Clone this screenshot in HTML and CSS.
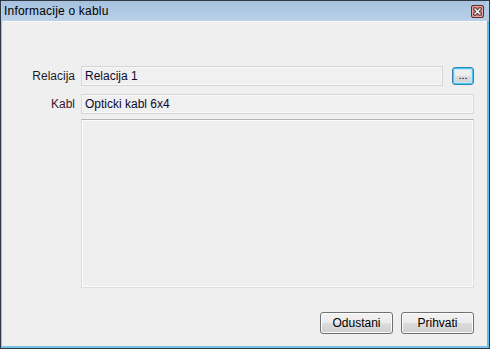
FILE: index.html
```html
<!DOCTYPE html>
<html>
<head>
<meta charset="utf-8">
<link rel="stylesheet" href="styles.css">
</head>
<body>
<div class="window">
  <div class="titlebar">
    <span class="title">Informacije o kablu</span>
    <span class="close">
      <svg width="13" height="13" viewBox="0 0 13 13">
        <rect x="0.5" y="0.5" width="12" height="12" rx="1.5" fill="#c9706e" stroke="#5b2a2a"/>
        <rect x="1.5" y="1.5" width="10" height="10" rx="1" fill="none" stroke="#e8a8a4" stroke-width="1"/>
        <path d="M4 4 L9 9 M9 4 L4 9" stroke="#3a2a2a" stroke-width="3" stroke-linecap="square"/>
        <path d="M4 4 L9 9 M9 4 L4 9" stroke="#ffffff" stroke-width="1.5" stroke-linecap="square"/>
      </svg>
    </span>
  </div>
  <div class="frame">
    <div class="content">
      <div class="form">
        <label class="lbl">Relacija</label>
        <div class="fieldrow">
          <div class="field grow">Relacija 1</div>
          <button class="dots">...</button>
        </div>
        <label class="lbl lbl-kabl">Kabl</label>
        <div class="field">Opticki kabl 6x4</div>
        <span></span>
        <div class="memo"></div>
      </div>
      <div class="actions">
        <button class="btn">Odustani</button>
        <button class="btn">Prihvati</button>
      </div>
    </div>
  </div>
</div>
</body>
</html>
```

FILE: styles.css
```css
* { box-sizing: border-box; }
html, body { margin: 0; padding: 0; }
body {
  width: 490px;
  height: 349px;
  overflow: hidden;
  font-family: "Liberation Sans", Arial, sans-serif;
  font-size: 12px;
}
.window {
  width: 490px;
  height: 349px;
  border: 1px solid #2e3943;
  display: flex;
  flex-direction: column;
  background: #f0f0f0;
}
.titlebar {
  height: 20px;
  flex: none;
  background: linear-gradient(#a7c1de, #bad1ea);
  display: flex;
  align-items: center;
  justify-content: space-between;
  padding: 0 2px 0 2px;
  border-left: 1px solid #b5cde6;
  border-right: 3px solid #b5cde6;
}
.title {
  color: #000;
  font-size: 12px;
  letter-spacing: 0.2px;
}
.close {
  display: flex;
  width: 13px;
  height: 13px;
}
.frame {
  flex: 1;
  display: flex;
  border-left: 1px solid #9cc2e2;
  border-right: 2px solid #5fbbe6;
  border-bottom: 2px solid #78c2e8;
}
.content {
  flex: 1;
  border-top: 1px solid #fafafa;
  background: #efefef;
  display: flex;
  flex-direction: column;
  padding: 44px 13px 12px 0;
}
.form {
  display: grid;
  grid-template-columns: 73px 1fr;
  column-gap: 6px;
  row-gap: 8px;
}
.lbl {
  text-align: right;
  align-self: center;
  color: #1c1c24;
}
.lbl-kabl { color: #3e1430; }
.fieldrow {
  display: flex;
  gap: 9px;
  align-items: center;
}
.grow { flex: 1; }
.field {
  height: 20px;
  border: 1px solid #d6d6d6;
  background: #f0f0f0;
  box-shadow: inset 0 0 0 1px #f7f7f7;
  color: #0a0a2e;
  padding: 3px 0 0 3px;
  line-height: 13px;
}
.dots {
  width: 22px;
  height: 18px;
  padding: 0 0 3px 0;
  font-family: inherit;
  font-size: 11px;
  line-height: 10px;
  color: #000;
  border: 1px solid #3c7fb1;
  border-radius: 3px;
  background: linear-gradient(#f2f2f2 0%, #ebebeb 50%, #dddddd 50%, #cfcfcf 100%);
  box-shadow: inset 0 0 0 1px #48c8f4, inset 0 0 0 2px #bfe8f8;
}
.memo {
  height: 169px;
  margin-top: -3px;
  border: 1px solid #dcdde2;
  border-top-color: #b4b4b4;
  box-shadow: inset 0 0 0 1px #fbfbfb;
  background: #efefef;
}
.actions {
  margin-top: auto;
  display: flex;
  justify-content: flex-end;
  gap: 8px;
}
.btn {
  width: 73px;
  height: 22px;
  font-family: inherit;
  font-size: 12px;
  color: #000;
  border: 1px solid #707070;
  border-radius: 3px;
  background: linear-gradient(#f2f2f2 0%, #ebebeb 50%, #dddddd 50%, #cfcfcf 100%);
  box-shadow: inset 0 0 0 1px #fcfcfc;
  padding: 0;
}
```
